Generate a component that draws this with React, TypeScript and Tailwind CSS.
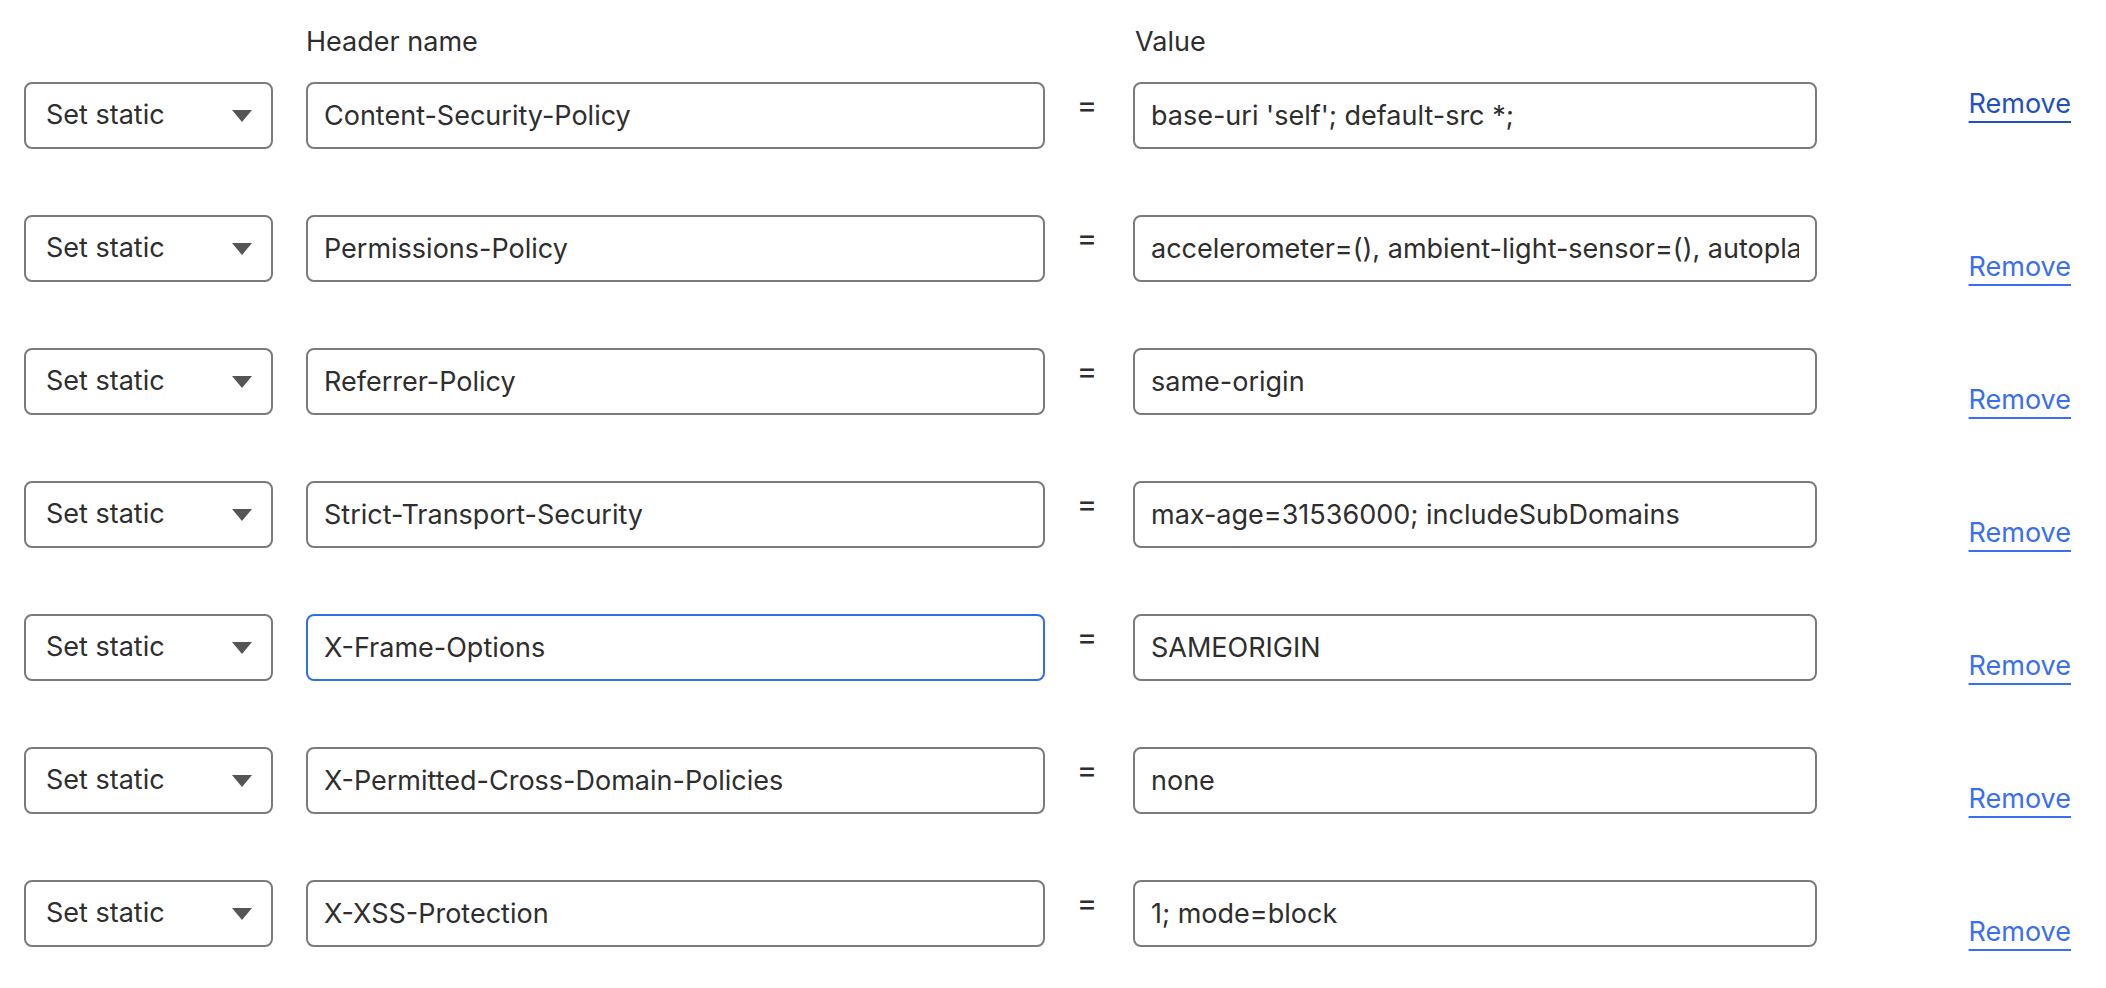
const rows = [
  { name: "Content-Security-Policy", value: "base-uri 'self'; default-src *;" },
  { name: "Permissions-Policy", value: "accelerometer=(), ambient-light-sensor=(), autoplay=(), battery=(), camera=()" },
  { name: "Referrer-Policy", value: "same-origin" },
  { name: "Strict-Transport-Security", value: "max-age=31536000; includeSubDomains" },
  { name: "X-Frame-Options", value: "SAMEORIGIN" },
  { name: "X-Permitted-Cross-Domain-Policies", value: "none" },
  { name: "X-XSS-Protection", value: "1; mode=block" },
]

function Row({ name, value, index }: { name: string; value: string; index: number }) {
  const focused = index === 4
  return (
    <div className="flex h-[67px]">
      <div className="w-[249px] h-full flex items-center justify-between pl-[20px] pr-[19px] border-2 border-[#7b7b7b] rounded-[8px] text-[#2e2e2e]">
        <span>Set static</span>
        <svg width="20" height="12" viewBox="0 0 20 12">
          <path d="M0 0 H20 L10 12 Z" fill="#555555" />
        </svg>
      </div>
      <input
        readOnly
        defaultValue={name}
        className={
          focused
            ? "ml-[33px] w-[739px] h-full px-[16px] border-2 border-[#2f6fe8] rounded-[8px] text-[#2e2e2e] outline-none"
            : "ml-[33px] w-[739px] h-full px-[16px] border-2 border-[#7b7b7b] rounded-[8px] text-[#2e2e2e] outline-none"
        }
      />
      <div className="w-[88px] flex justify-center pt-[6px] pr-[4px] text-[#2e2e2e] text-[31px] leading-[34px]">=</div>
      <input
        readOnly
        defaultValue={value}
        className="w-[684px] h-full px-[16px] border-2 border-[#7b7b7b] rounded-[8px] text-[#2e2e2e] outline-none"
      />
      <a
        href="#"
        className={
          index === 0
            ? "ml-auto mr-[35px] self-start mt-[2px] text-[#2150c0] underline decoration-2 underline-offset-[8px]"
            : "ml-auto mr-[35px] self-end mb-[-5px] text-[#3a6ff0] underline decoration-2 underline-offset-[8px]"
        }
      >
        Remove
      </a>
    </div>
  )
}

export default function App() {
  return (
    <div className="w-[2106px] h-[988px] bg-white pl-[24px] text-[27px] overflow-hidden" style={{ fontFamily: "Inter, 'Noto Sans', sans-serif" }}>
      <div className="flex h-[82px] pt-[25px] text-[27px] text-[#2e2e2e] leading-[34px]">
        <div className="ml-[282px] w-[829px]">Header name</div>
        <div>Value</div>
      </div>
      <div className="flex flex-col gap-[66px]">
        {rows.map((r, i) => (
          <Row key={r.name} name={r.name} value={r.value} index={i} />
        ))}
      </div>
    </div>
  )
}
